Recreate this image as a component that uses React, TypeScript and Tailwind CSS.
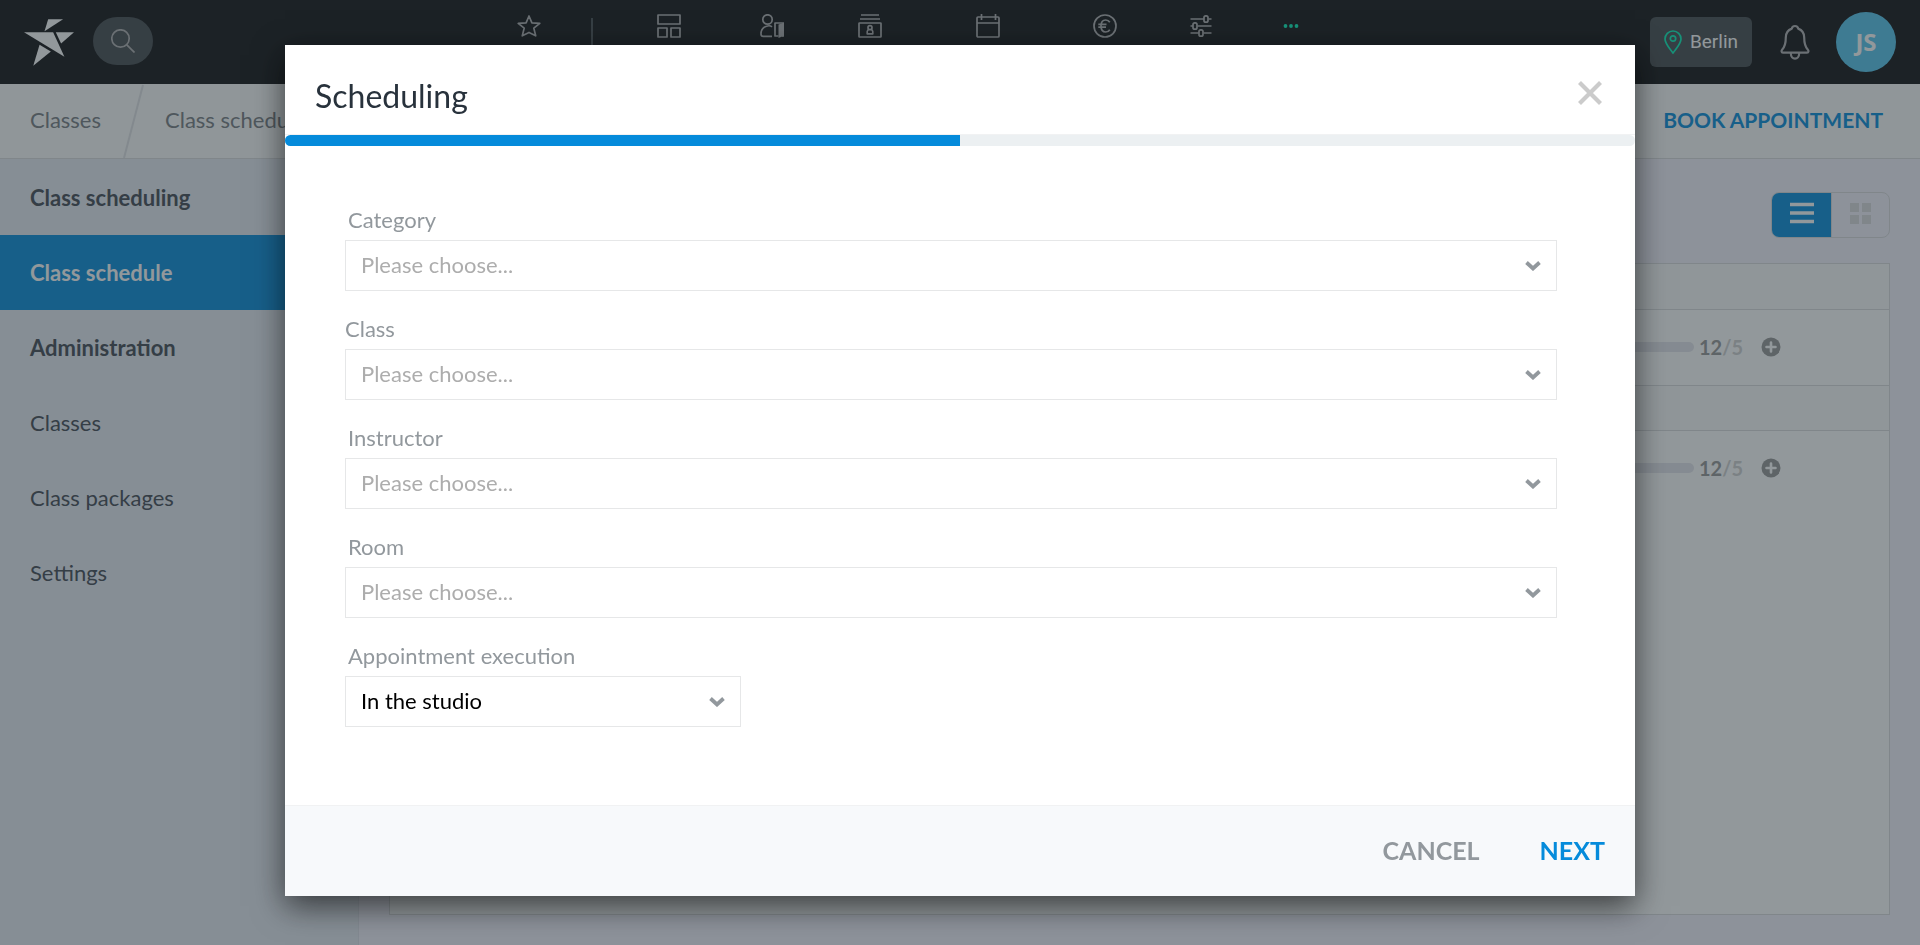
import React from "react";

const strokeProps = {
  fill: "none",
  stroke: "currentColor",
  strokeWidth: 1.7,
  strokeLinejoin: "round" as const,
};

function StarLogo() {
  return (
    <svg viewBox="73 57 151 140" className="h-[47px] w-[50px]" fill="currentColor" aria-hidden="true">
      <path d="M146 57H191L135 93Z" />
      <path d="M73 96H161L195 170Z" />
      <path d="M169 96H224L185 130Z" />
      <path d="M120 134L154 154L101 197Z" />
    </svg>
  );
}

function NavIcon({ children }: { children: React.ReactNode }) {
  return (
    <svg viewBox="0 0 24 24" className="size-6" {...strokeProps} aria-hidden="true">
      {children}
    </svg>
  );
}

const navItems = [
  {
    name: "Dashboard",
    width: "w-[104px]",
    icon: (
      <>
        <path d="M1 1H23V10H1ZM1 14H10V23H1ZM14 14H23V23H14Z" />
      </>
    ),
  },
  {
    name: "Check-in",
    width: "w-[102px]",
    icon: (
      <>
        <circle cx="7.5" cy="5.5" r="4.7" />
        <path d="M12 12.8C10.600 11.700 8.500 11.500 6.500 12.200C2.500 13.500 .9 16.500 1 20.200C1.050 21.800 2 22.300 3.300 22.300H12" />
        <path d="M18.500 22H15V9H23.500V22H22" />
        <path d="M18.500 10.500L23.500 9V22L18.500 24Z" fill="currentColor" stroke="none" />
      </>
    ),
  },
  {
    name: "Members",
    width: "w-[94px]",
    icon: (
      <>
        <path d="M3 1H21M2 5H22" />
        <rect x="1" y="9" width="22" height="14" rx="0.500" />
        <circle cx="12" cy="13.700" r="2" />
        <path d="M10.300 15.600C9 16.600 8.900 18 9.200 19.800H14.800C15.100 18 15 16.600 13.700 15.600" />
      </>
    ),
  },
  {
    name: "Calendar",
    width: "w-[142px]",
    icon: (
      <>
        <rect x="1" y="3" width="22" height="20" rx="1" />
        <path d="M1 9H23M5.500 0V6M19.500 0V6" />
      </>
    ),
  },
  {
    name: "Finance",
    width: "w-[92px]",
    icon: (
      <>
        <circle cx="12" cy="12" r="11" />
        <path d="M16.800 8.300C15.800 6.700 14.400 6 12.700 6C9.700 6 8 8.500 8 12C8 15.500 9.700 18 12.700 18C14.400 18 15.800 17.300 16.800 15.700M5.300 10.400H13.500M5.300 13.200H13" />
      </>
    ),
  },
  {
    name: "Settings",
    width: "w-[100px]",
    icon: (
      <>
        <path d="M1.500 5H15M19.500 5H22.500M1.500 12H4M8.500 12H22.500M1.500 19H10M14.500 19H22.500" />
        <rect x="15" y="1.800" width="4" height="6.400" rx="1.800" />
        <rect x="4" y="8.800" width="4" height="6.400" rx="1.800" />
        <rect x="10" y="15.800" width="4" height="6.400" rx="1.800" />
      </>
    ),
  },
];

function TopBar() {
  return (
    <header className="flex h-[84px] bg-[#0f0f11] text-[#afaeb0]">
      <div className="flex flex-1 items-start pl-6 pt-[17px]">
        <a href="#home" aria-label="Home" className="mr-[19px] mt-0.5 text-white">
          <StarLogo />
        </a>
        <button type="button" aria-label="Search" className="flex h-12 w-[60px] items-center justify-center rounded-3xl bg-[#454a4e]">
          <svg viewBox="0 0 24 24" className="size-6" {...strokeProps} aria-hidden="true">
            <circle cx="9.500" cy="9.500" r="8.700" />
            <path d="M15.800 15.800L23.500 23.500" />
          </svg>
        </button>
      </div>
      <nav aria-label="Main" className="flex items-start pr-[98px]">
        <button type="button" aria-label="Favourites" className="flex w-[76px] justify-center pt-3.5">
          <NavIcon>
            <path d="M12 2L14.900 8.900L22.800 9.400L16.800 14.100L18.700 21.800L12 18.400L5.300 21.800L7.200 14.100L1.200 9.400L9.100 8.900Z" />
          </NavIcon>
        </button>
        <span className="mx-6 mt-[18px] h-12 w-0.5 bg-[#454a4e]" />
        {navItems.map((item) => (
          <button key={item.name} type="button" aria-label={item.name} className={`flex justify-center pt-3.5 ${item.width}`}>
            <NavIcon>{item.icon}</NavIcon>
          </button>
        ))}
        <button type="button" aria-label="More" className="flex w-20 justify-center pt-3.5 text-[#05f0b8]">
          <svg viewBox="0 0 24 24" className="size-6" fill="currentColor" aria-hidden="true">
            <circle cx="6.500" cy="12" r="1.900" />
            <circle cx="12" cy="12" r="1.900" />
            <circle cx="17.500" cy="12" r="1.900" />
          </svg>
        </button>
      </nav>
      <div className="flex flex-1 items-center justify-end pr-6">
        <button type="button" className="flex h-[50px] w-[102px] items-center justify-center gap-2 rounded-md bg-[#454a4e] font-['Roboto',sans-serif] text-[19px] text-white">
          <svg viewBox="0 0 18 24" className="h-6 w-[18px] text-[#05f0b8]" {...strokeProps} aria-hidden="true">
            <path d="M9 23C5 17.500 1 13.500 1 9C1 4.500 4.500 1 9 1C13.500 1 17 4.500 17 9C17 13.500 13 17.500 9 23Z" />
            <circle cx="9" cy="8.500" r="2.700" />
          </svg>
          Berlin
        </button>
        <button type="button" aria-label="Notifications" className="ml-7 mr-[26px]">
          <svg viewBox="0 0 30 36" className="h-9 w-[30px]" {...strokeProps} strokeWidth={2.2} aria-hidden="true">
            <path d="M15 2C13 2 12 3 11.800 4.600C8 6 5.800 9 5.800 13.500C5.800 19 5 22.500 2.300 25.400C1.100 26.800 1.300 28.700 3 28.700H27C28.700 28.700 28.900 26.800 27.700 25.400C25 22.500 24.200 19 24.200 13.500C24.200 9 22 6 18.200 4.600C18 3 17 2 15 2Z" />
            <path d="M10.800 29C10.800 36.500 19.200 36.500 19.200 29" />
          </svg>
        </button>
        <button type="button" className="size-[60px] rounded-full bg-[#55c5ed] font-['Open_Sans',sans-serif] text-[24px] font-bold text-white">
          JS
        </button>
      </div>
    </header>
  );
}

const sideItems = [
  { text: "Class scheduling", style: "text-[#424852] font-bold" },
  { text: "Class schedule", style: "bg-[#058bdb] text-white font-bold" },
  { text: "Administration", style: "text-[#424852] font-bold" },
  { text: "Classes", style: "text-[#424852]" },
  { text: "Class packages", style: "text-[#424852]" },
  { text: "Settings", style: "text-[#424852]" },
];

function BookingRow() {
  return (
    <tr className="h-[76px] border-b border-[#dadbdd] last:border-b-0">
      <td className="bg-white pr-[108px]">
        <div className="flex items-center justify-end">
          <span className="mr-[5px] h-2.5 w-40 rounded-full bg-[#e5e5ec]" />
          <span className="w-10 whitespace-nowrap text-[20px] font-bold text-[#969696]">
            12<span className="text-[#d0d0d0]">/5</span>
          </span>
          <button type="button" aria-label="Add participant" className="ml-[22px] text-[#969696]">
            <svg viewBox="0 0 20 20" className="size-5" aria-hidden="true">
              <circle cx="10" cy="10" r="9.500" fill="currentColor" />
              <path d="M10 5.500V14.500M5.500 10H14.500" stroke="white" strokeWidth="2.600" strokeLinecap="round" />
            </svg>
          </button>
        </div>
      </td>
    </tr>
  );
}

function GroupRow() {
  return (
    <tr className="h-[45px] border-b border-[#dadbdd]">
      <td className="bg-[#fafafa]" />
    </tr>
  );
}

interface FieldProps {
  id: string;
  label: string;
  value?: string;
  labelStyle?: string;
  boxStyle?: string;
}

function Field({ id, label, value, labelStyle = "pl-[3px]", boxStyle = "w-full" }: FieldProps) {
  return (
    <div>
      <label htmlFor={id} className={`block pb-1.5 leading-7 text-[#92989d] ${labelStyle}`}>
        {label}
      </label>
      <div className={`grid items-center ${boxStyle}`}>
        <select
          id={id}
          defaultValue=""
          className={`col-start-1 row-start-1 h-[51px] w-full appearance-none border border-[#e6e7e8] bg-white px-[15px] pb-0.5 ${value ? "text-black" : "text-[#adadad]"}`}
        >
          <option value="">{value ?? "Please choose..."}</option>
        </select>
        <svg viewBox="0 0 16 10" className="pointer-events-none col-start-1 row-start-1 mr-4 h-2.5 w-4 justify-self-end text-[#92989d]" fill="none" stroke="currentColor" strokeWidth="3.800" aria-hidden="true">
          <path d="M1.500 1.500L8 7.500L14.500 1.500" />
        </svg>
      </div>
    </div>
  );
}

function SchedulingDialog() {
  return (
    <section
      role="dialog"
      aria-modal="true"
      aria-labelledby="dialog-title"
      className="w-[1350px] max-w-full bg-white shadow-[0_10px_30px_rgba(0,0,0,0.6)]"
    >
      <div className="flex h-[90px] items-center justify-between border-b border-[#f1f2f3] pl-[30px] pr-8">
        <h1 id="dialog-title" className="pt-3 text-[32px] leading-10 text-[#28323c]">
          Scheduling
        </h1>
        <button type="button" aria-label="Close" className="pt-1.5 text-[#cbcbcb]">
          <svg viewBox="0 0 26 26" className="size-[26px]" fill="none" stroke="currentColor" strokeWidth="4.200" aria-hidden="true">
            <path d="M2.500 2.500L23.500 23.500M23.500 2.500L2.500 23.500" />
          </svg>
        </button>
      </div>
      <div role="progressbar" aria-valuenow={50} aria-label="Progress" className="h-[11px] overflow-hidden rounded-full bg-[#ecf0f2]">
        <div className="h-full w-1/2 bg-[#058bdb]" />
      </div>
      <form id="scheduling-form" className="flex flex-col gap-6 pb-[78px] pl-[60px] pr-[78px] pt-[60px]">
        <Field id="category" label="Category" />
        <Field id="class" label="Class" labelStyle="pl-0" />
        <Field id="instructor" label="Instructor" />
        <Field id="room" label="Room" />
        <Field id="execution" label="Appointment execution" value="In the studio" boxStyle="w-[396px] max-w-full" />
      </form>
      <footer className="flex h-[91px] items-center justify-end gap-[60px] border-t border-[#f1f2f3] bg-[#f7f9fb] pr-[30px] text-[25px] font-bold">
        <button type="button" className="text-[#92989d]">
          CANCEL
        </button>
        <button type="submit" form="scheduling-form" className="text-[#058bdb]">
          NEXT
        </button>
      </footer>
    </section>
  );
}

export default function App() {
  return (
    <div className="font-['Lato','Liberation_Sans',sans-serif] text-[22px]">
      <div className="flex min-h-screen flex-col bg-[#f4f2fc]">
        <TopBar />
        <div className="flex h-[75px] items-center border-b border-[#dadbdd] bg-[#fafafa]">
          <nav aria-label="Breadcrumb" className="flex items-center text-[#767b81]">
            <a href="#classes" className="w-[123px] pb-[3px] pl-[30px]">
              Classes
            </a>
            <svg viewBox="0 0 22 74" className="h-[74px] w-[22px] text-[#e0e1e4]" aria-hidden="true">
              <path d="M1 74L20 1" stroke="currentColor" strokeWidth="2" />
            </svg>
            <a href="#schedule" className="pb-[3px] pl-5">
              Class schedule
            </a>
          </nav>
          <a href="#book" className="ml-auto pb-[3px] pr-[37px] text-[21px] font-bold text-[#058bdb]">
            BOOK APPOINTMENT
          </a>
        </div>
        <div className="flex flex-1">
          <nav aria-label="Classes" className="w-[359px] shrink-0 border-r border-[#dfe1ea] bg-[#e6eaf2] pt-px">
            {sideItems.map((item) => (
              <a key={item.text} href="#section" className={`flex h-[75px] items-center pl-[30px] ${item.style}`}>
                {item.text}
              </a>
            ))}
          </nav>
          <main className="flex flex-1 flex-col pb-[30px] pl-[30px] pr-[30px] pt-[33px]">
            <div className="mb-[25px] flex h-[46px] w-[119px] self-end overflow-hidden rounded-lg border border-[#dadbdd]">
              <button type="button" aria-label="List view" className="flex w-[59px] items-center justify-center bg-[#058bdb] pb-1 text-white">
                <svg viewBox="0 0 24 22" className="h-[22px] w-6" aria-hidden="true">
                  <path d="M0 2.500H24M0 11H24M0 19.500H24" stroke="currentColor" strokeWidth="3.600" />
                </svg>
              </button>
              <button type="button" aria-label="Grid view" className="flex flex-1 items-center justify-center border-l border-[#dadbdd] pb-1 text-[#dadbdd]">
                <svg viewBox="0 0 21 21" className="size-[21px]" fill="currentColor" aria-hidden="true">
                  <path d="M0 0H9V9H0ZM12 0H21V9H12ZM0 12H9V21H0ZM12 12H21V21H12Z" />
                </svg>
              </button>
            </div>
            <div className="flex-1 border border-[#dadbdd] bg-white">
              <table aria-label="Class schedule" className="w-full border-collapse">
                <tbody>
                  <GroupRow />
                  <BookingRow />
                  <GroupRow />
                  <BookingRow />
                </tbody>
              </table>
            </div>
          </main>
        </div>
      </div>
      <div className="fixed inset-0 flex items-start justify-center overflow-auto bg-[#2a343a]/51 pt-[45px]">
        <SchedulingDialog />
      </div>
    </div>
  );
}
